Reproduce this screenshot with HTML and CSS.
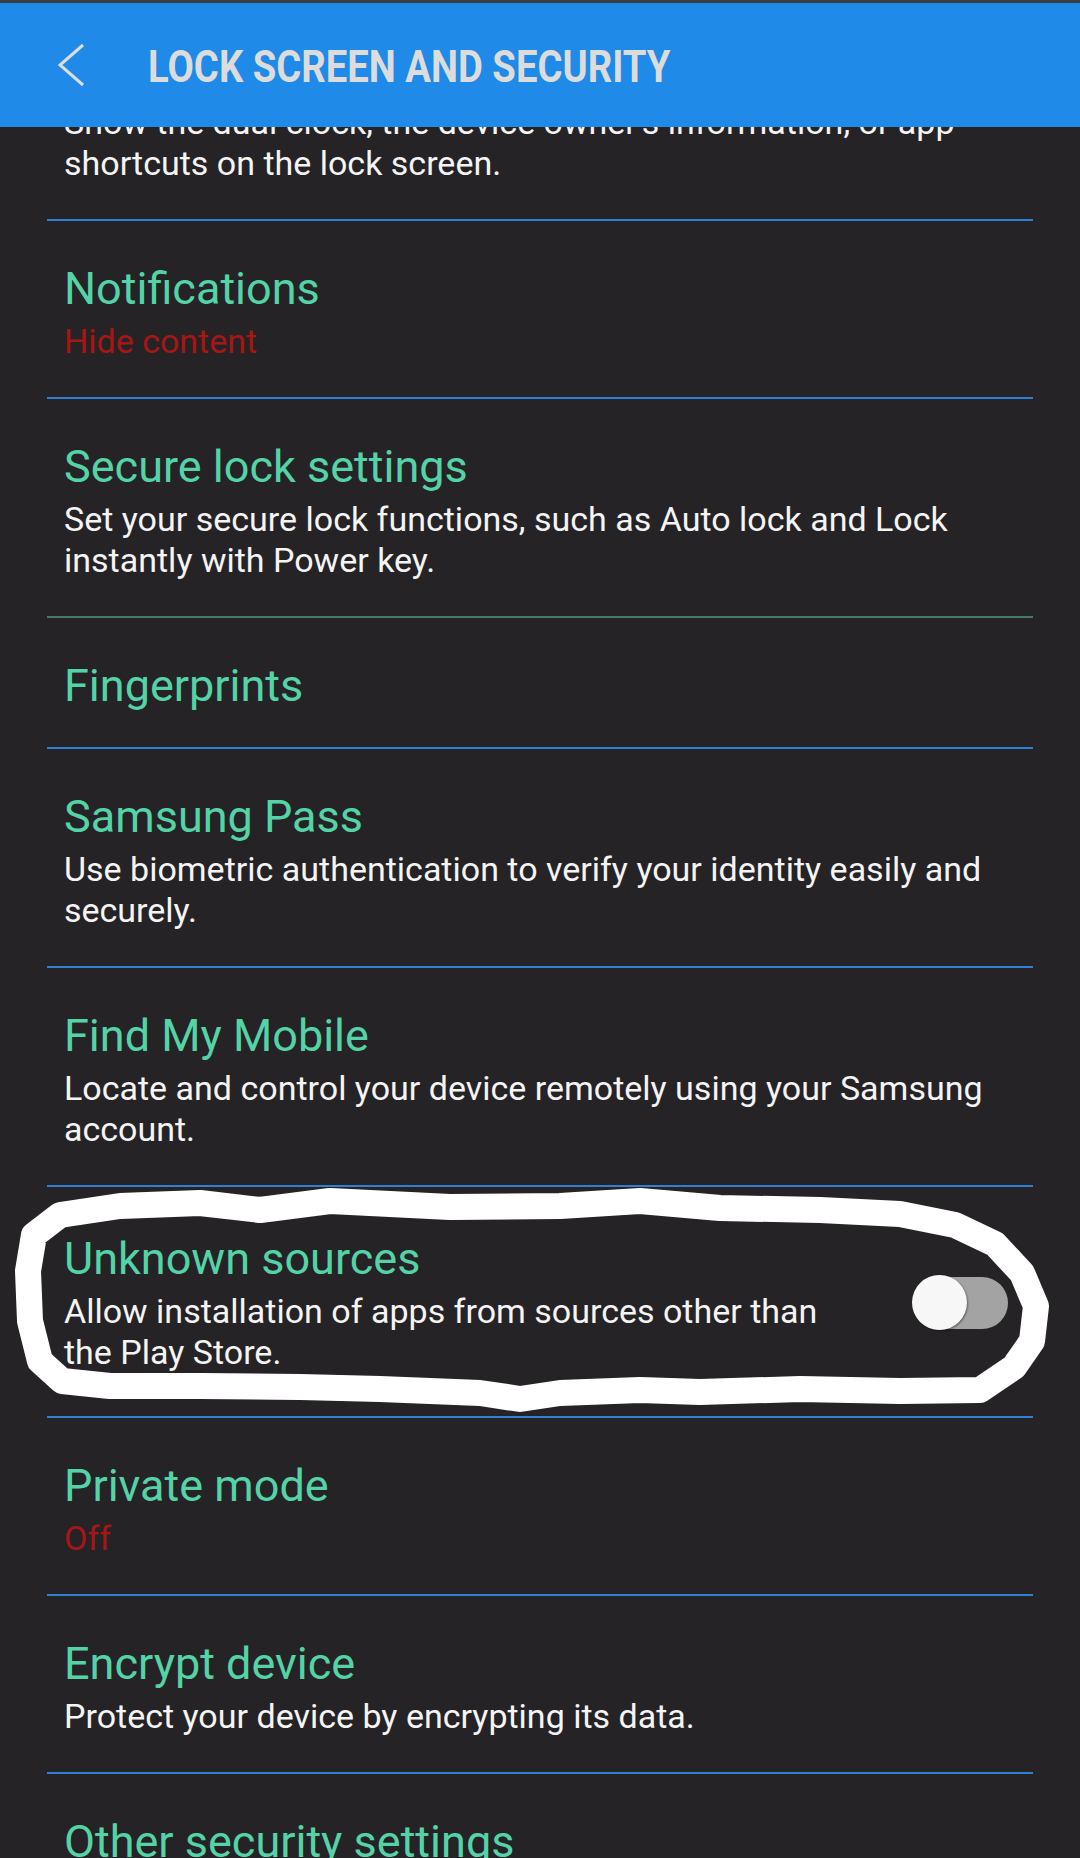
FILE: index.html
```html
<!DOCTYPE html>
<html lang="en">

<head>
    <meta charset="UTF-8">
    <meta name="viewport" content="width=device-width, initial-scale=1.0">
    <title>Lock screen and security</title>
    <link rel="stylesheet" href="styles.css">
</head>

<body>
    <header class="appbar">
        <svg class="back" width="28" height="44" viewBox="0 0 28 44">
            <path d="M25 2 L2 22 L25 42" fill="none" stroke="#dcdcdc" stroke-width="3" />
        </svg>
        <h1 class="appbar-title">LOCK SCREEN AND SECURITY</h1>
    </header>

    <section class="list">
        <div class="item">
            <div class="item-text">
                <div class="item-title scrolled">Info and app shortcuts</div>
                <div class="item-sub">Show the dual clock, the device owner's information, or app shortcuts on the lock screen.</div>
            </div>
        </div>
        <div class="item">
            <div class="item-text">
                <div class="item-title">Notifications</div>
                <div class="item-sub status">Hide content</div>
            </div>
        </div>
        <div class="item green-line">
            <div class="item-text">
                <div class="item-title">Secure lock settings</div>
                <div class="item-sub">Set your secure lock functions, such as Auto lock and Lock instantly with Power key.</div>
            </div>
        </div>
        <div class="item">
            <div class="item-text">
                <div class="item-title">Fingerprints</div>
            </div>
        </div>
        <div class="item">
            <div class="item-text">
                <div class="item-title">Samsung Pass</div>
                <div class="item-sub">Use biometric authentication to verify your identity easily and securely.</div>
            </div>
        </div>
        <div class="item">
            <div class="item-text">
                <div class="item-title">Find My Mobile</div>
                <div class="item-sub">Locate and control your device remotely using your Samsung account.</div>
            </div>
        </div>
        <div class="item highlight">
            <div class="item-text">
                <div class="item-title">Unknown sources</div>
                <div class="item-sub">Allow installation of apps from sources other than the Play Store.</div>
            </div>
            <div class="toggle"><span class="toggle-thumb"></span></div>
            <!-- hand drawn circle round the row -->
            <svg class="scribble" width="1080" height="231" viewBox="0 1186 1080 231">
                <path d="M60 1214 L120 1205 L200 1202 L260 1209 L330 1200 L450 1206 L560 1205 L640 1200 L720 1207 L820 1209 L900 1213 L955 1224 L995 1243 L1022 1272 L1036 1305 L1032 1340 L1014 1366 L980 1389 L900 1390 L800 1388 L700 1391 L640 1389 L560 1392 L520 1398 L480 1392 L380 1388 L300 1386 L200 1385 L110 1385 L62 1380 L40 1360 L30 1320 L28 1270 L34 1234 Z"
                    fill="none" stroke="#ffffff" stroke-width="26" stroke-linejoin="round" stroke-linecap="round" />
            </svg>
        </div>
        <div class="item">
            <div class="item-text">
                <div class="item-title">Private mode</div>
                <div class="item-sub status">Off</div>
            </div>
        </div>
        <div class="item">
            <div class="item-text">
                <div class="item-title">Encrypt device</div>
                <div class="item-sub">Protect your device by encrypting its data.</div>
            </div>
        </div>
        <div class="item">
            <div class="item-text">
                <div class="item-title">Other security settings</div>
            </div>
        </div>
    </section>
</body>

</html>
```

FILE: styles.css
```css
html,
body {
    margin: 0;
}

body {
    width: 1080px;
    height: 1858px;
    overflow: hidden;
    position: relative;
    background-color: #252325;
    font-family: Roboto, "Noto Sans", sans-serif;
}

/* app bar lies over the scrolled list */
.appbar {
    position: absolute;
    top: 0;
    left: 0;
    right: 0;
    z-index: 2;
    height: 124px;
    border-top: 3px solid #3d3d3d;
    background-color: #1f8ae8;
    display: flex;
    align-items: center;
}

.back {
    flex: none;
    margin-left: 58px;
}

.appbar-title {
    margin: 3px 0 0 62px;
    font-size: 45px;
    line-height: 52px;
    font-weight: 700;
    color: #dcdcdc;
    white-space: nowrap;
    transform: scaleX(0.85);
    transform-origin: left center;
}

.list {
    padding: 2px 47px 0;
}

.item {
    display: flex;
    align-items: center;
    padding: 42px 25px 35px 17px;
    border-bottom: 2px solid #2f7fd2;
}

.item.green-line {
    border-bottom-color: #4a7866;
}

.item.highlight {
    position: relative;
    padding-top: 46px;
    padding-bottom: 43px;
}

.item-text {
    flex: 1;
    min-width: 0;
}

.item-title {
    font-size: 45px;
    line-height: 52px;
    color: #55d3a8;
}

/* scrolled under the app bar */
.item-title.scrolled {
    visibility: hidden;
}

.item-sub {
    margin-top: 6px;
    font-size: 34px;
    line-height: 41px;
    color: #f4f4f4;
}

.item-sub.status {
    color: #a51616;
}

.toggle {
    flex: none;
    position: relative;
    margin-left: 60px;
    width: 95px;
    height: 52px;
    border-radius: 26px;
    background-color: #a3a3a3;
}

.toggle-thumb {
    position: absolute;
    left: -1px;
    top: -2px;
    width: 55px;
    height: 55px;
    border-radius: 50%;
    background-color: #f7f7f7;
    box-shadow: 1px 1px 2px rgba(0, 0, 0, 0.4);
}

.scribble {
    position: absolute;
    left: -47px;
    top: 0;
    overflow: visible;
    pointer-events: none;
}
```
